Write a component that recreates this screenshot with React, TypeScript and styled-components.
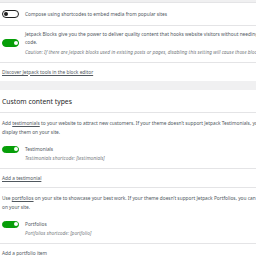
import React from "react";
import styled, { createGlobalStyle } from "styled-components";

const Global = createGlobalStyle`
  html, body { margin: 0; padding: 0; }
  body {
    background: #f0f0f1;
    font-family: "Noto Sans", "Open Sans", sans-serif;
    color: #50575e;
    overflow: hidden;
    width: 256px;
    height: 256px;
  }
`;

const Page = styled.div`
  width: 420px;
  padding-top: 2px;
  display: flex;
  flex-direction: column;
  gap: 9px;
`;

const Card = styled.section`
  background: #fff;
  display: flex;
  flex-direction: column;
`;

const Row = styled.div<{ $pad?: string }>`
  display: flex;
  align-items: center;
  gap: 6px;
  padding: ${(p) => p.$pad || "7px 2px"};
  border-top: 1px solid #e4e4e6;
  font-size: 4.8px;
  line-height: 8px;
`;

const Track = styled.span<{ $on?: boolean }>`
  flex: none;
  position: relative;
  width: 17px;
  height: 7.5px;
  box-sizing: border-box;
  border-radius: 4px;
  border: 1px solid ${(p) => (p.$on ? "#069e08" : "#1e1e1e")};
  background: ${(p) => (p.$on ? "#069e08" : "#fff")};
`;

const Knob = styled.span<{ $on?: boolean }>`
  position: absolute;
  top: 0.75px;
  left: ${(p) => (p.$on ? "10.5px" : "1px")};
  width: 4px;
  height: 4px;
  border-radius: 50%;
  background: ${(p) => (p.$on ? "#fff" : "#1e1e1e")};
`;

const Toggle = ({ on }: { on?: boolean }) => (
  <Track $on={on}>
    <Knob $on={on} />
  </Track>
);

const TextCol = styled.div`
  display: flex;
  flex-direction: column;
  min-width: 0;
  white-space: nowrap;
`;

const Caution = styled.p`
  margin: 2px 0 0;
  font-style: italic;
  color: #787c82;
`;

const Para = styled.p`
  margin: 0;
`;

const Link = styled.a`
  color: #50575e;
  text-decoration: underline;
`;

const Footer = styled.div`
  border-top: 1px solid #e4e4e6;
  padding: 4.5px 2px;
  font-size: 4.8px;
  line-height: 9px;
`;

const Header = styled.h2`
  margin: 0;
  padding: 6.5px 2px 5.5px;
  font-size: 6.8px;
  line-height: 10px;
  color: #1e1e1e;
  font-weight: 400;
`;

const Section = styled.div`
  border-top: 1px solid #e4e4e6;
  padding: 6px 2px 6px;
  font-size: 4.8px;
  line-height: 9px;
  display: flex;
  flex-direction: column;
  gap: 8px;
`;

const Option = styled.div`
  display: flex;
  align-items: flex-start;
  gap: 6px;
  line-height: 8.5px;
`;

const ToggleSlot = styled.span`
  display: flex;
  align-items: center;
  height: 8.5px;
`;

const Sub = styled.span`
  font-style: italic;
  color: #787c82;
`;

const Desc = styled.p`
  margin: 0;
  white-space: nowrap;
`;

export default function App() {
  return (
    <>
      <Global />
      <Page>
        <Card>
          <Row>
            <Toggle />
            <span>Compose using shortcodes to embed media from popular sites</span>
          </Row>
          <Row $pad="4px 2px 6px">
            <Toggle on />
            <TextCol>
              <Para>
                Jetpack Blocks give you the power to deliver quality content that hooks website visitors without needing to hire a developer or learn a single line of
                <br />
                code.
              </Para>
              <Caution>
                Caution: If there are Jetpack blocks used in existing posts or pages, disabling this setting will cause those blocks to stop working.
              </Caution>
            </TextCol>
          </Row>
          <Footer>
            <Link>Discover Jetpack tools in the block editor</Link>
          </Footer>
        </Card>
        <Card>
          <Header>Custom content types</Header>
          <Section>
            <Desc>
              Add <Link>testimonials</Link> to your website to attract new customers. If your theme doesn’t support Jetpack Testimonials, you can still use a simple shortcode to
              <br />
              display them on your site.
            </Desc>
            <Option>
              <ToggleSlot>
                <Toggle on />
              </ToggleSlot>
              <TextCol>
                <span>Testimonials</span>
                <Sub>Testimonials shortcode: [testimonials]</Sub>
              </TextCol>
            </Option>
          </Section>
          <Footer>
            <Link>Add a testimonial</Link>
          </Footer>
          <Section>
            <Desc>
              Use <Link>portfolios</Link> on your site to showcase your best work. If your theme doesn’t support Jetpack Portfolios, you can still use a simple shortcode to display them
              <br />
              on your site.
            </Desc>
            <Option>
              <ToggleSlot>
                <Toggle on />
              </ToggleSlot>
              <TextCol>
                <span>Portfolios</span>
                <Sub>Portfolios shortcode: [portfolio]</Sub>
              </TextCol>
            </Option>
          </Section>
          <Footer>
            <Link>Add a portfolio item</Link>
          </Footer>
        </Card>
      </Page>
    </>
  );
}
